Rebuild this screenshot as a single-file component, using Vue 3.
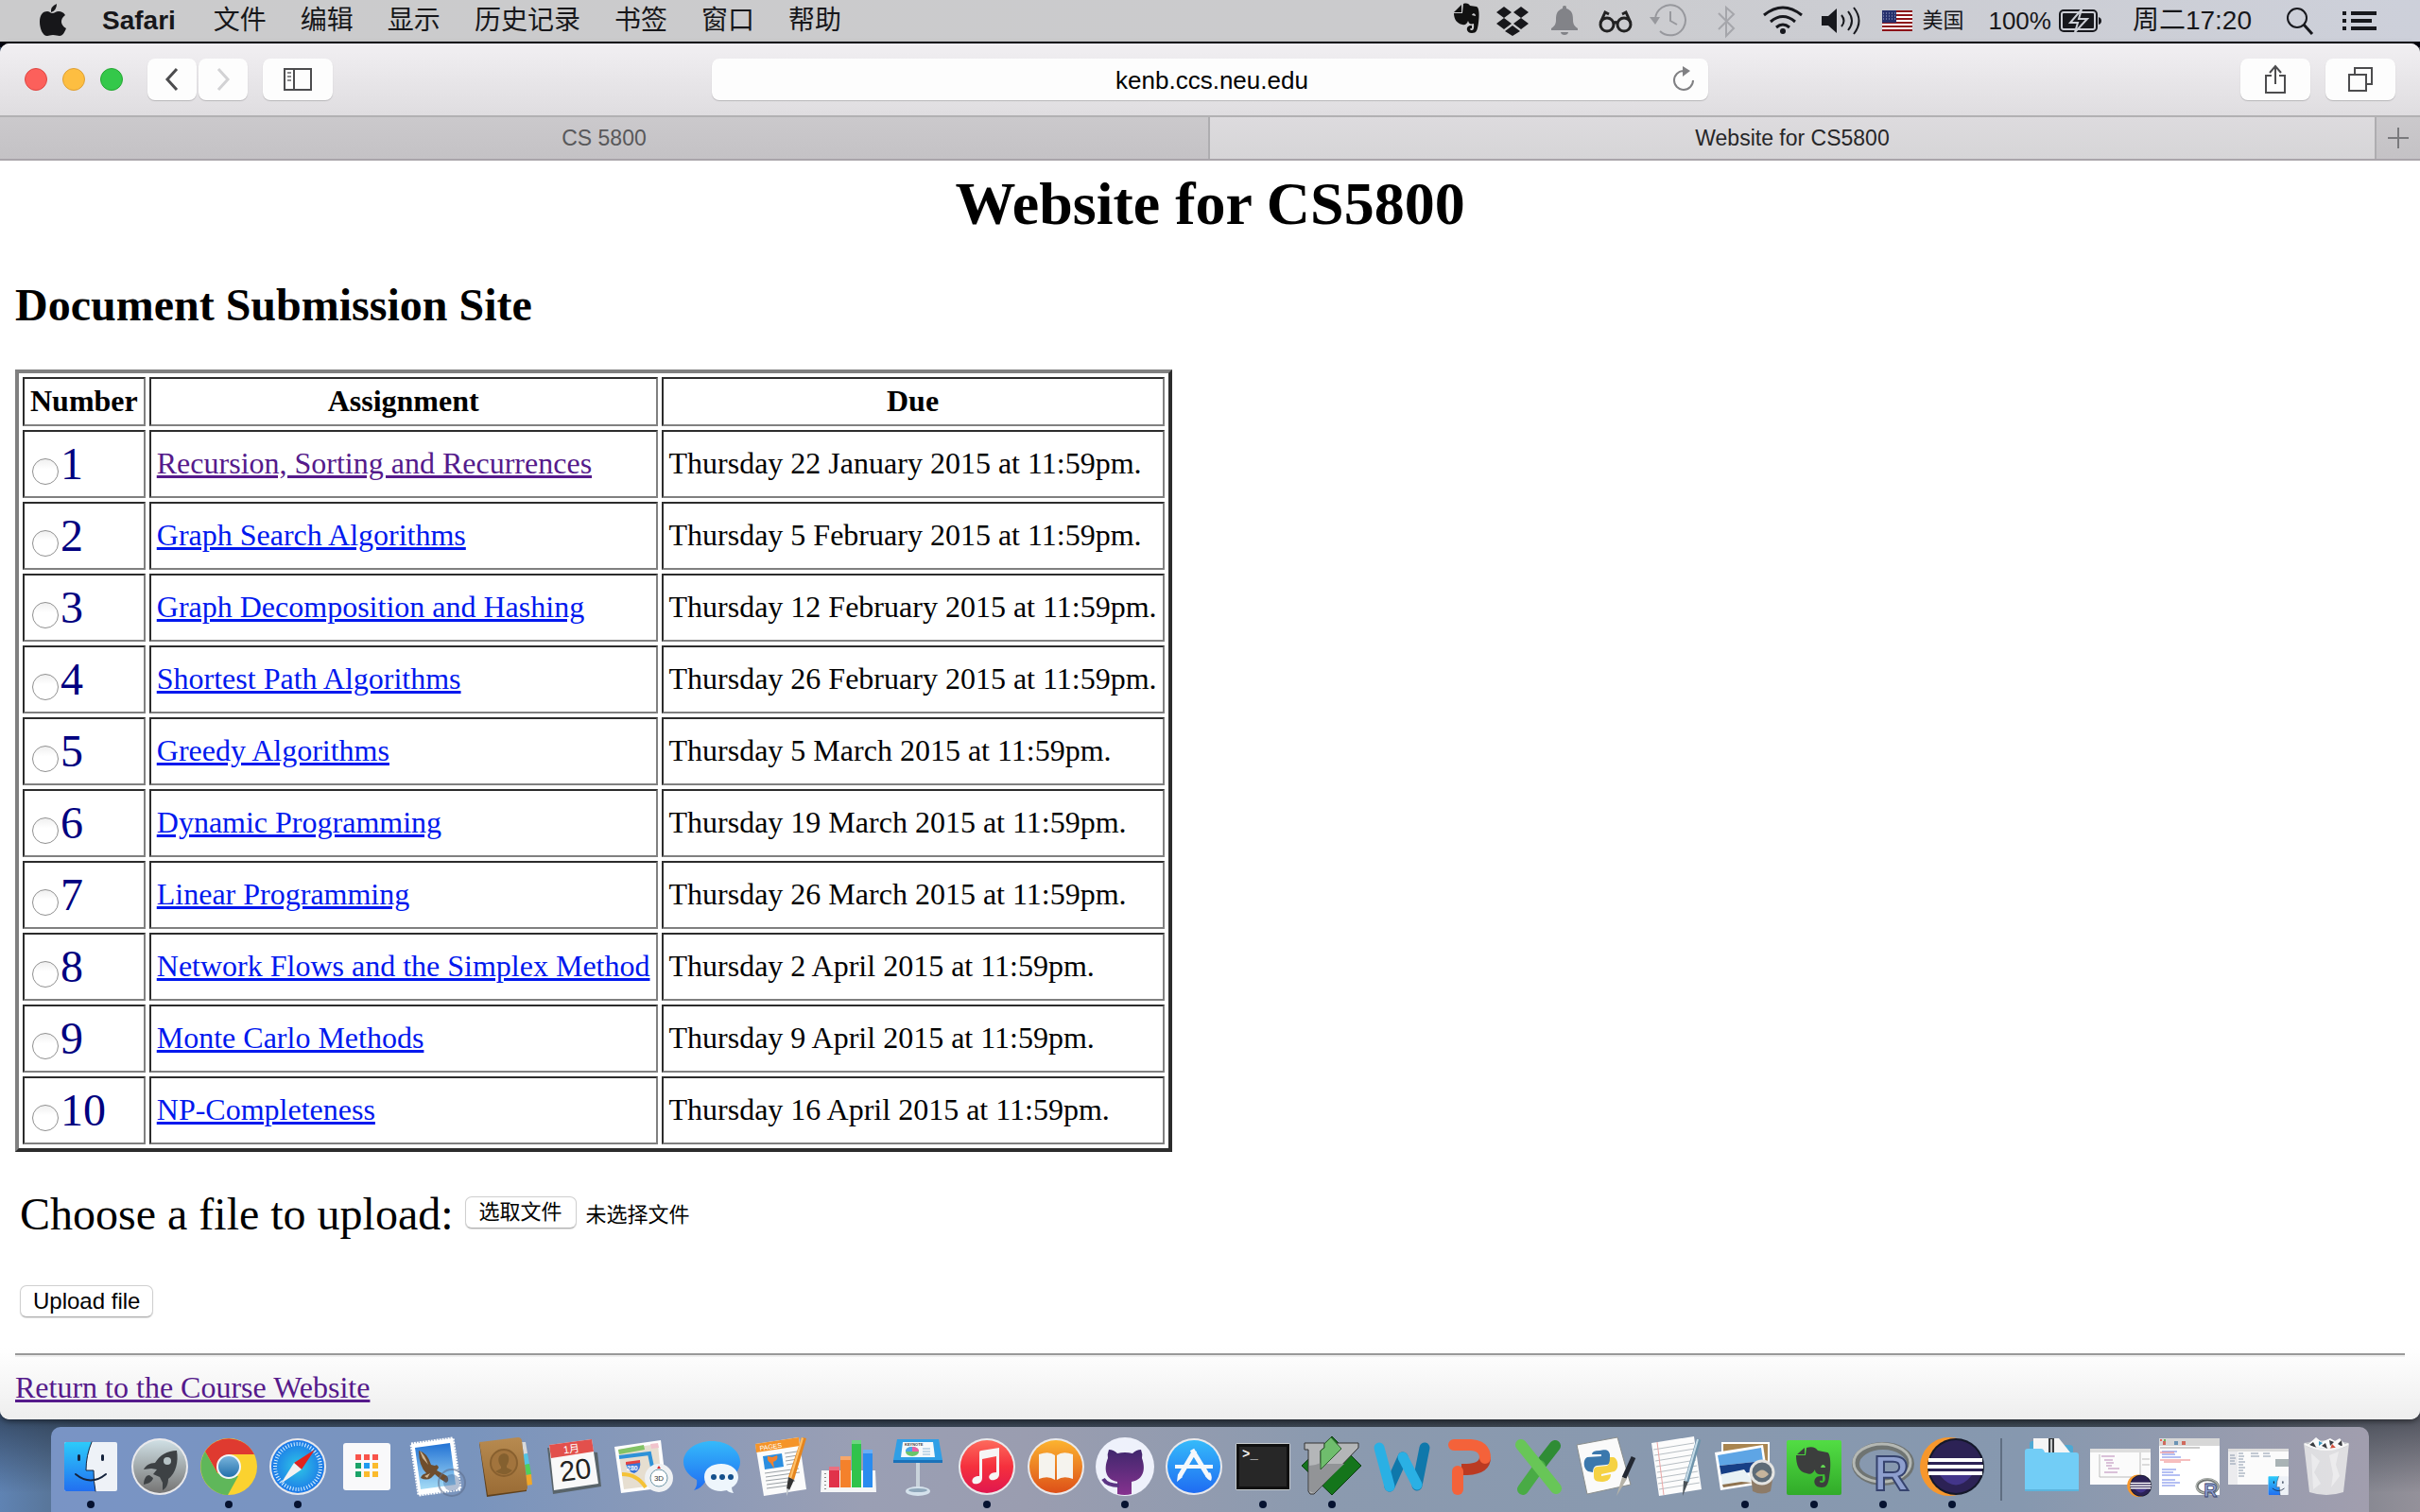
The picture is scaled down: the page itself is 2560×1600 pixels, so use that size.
<script setup>
import { ref } from 'vue'

const menus = ['文件', '编辑', '显示', '历史记录', '书签', '窗口', '帮助']

const url = ref('kenb.ccs.neu.edu')
const chosen = ref(null)
const picker = ref(null)

const assignments = [
  { title: 'Recursion, Sorting and Recurrences', due: 'Thursday 22 January 2015 at 11:59pm.', visited: true },
  { title: 'Graph Search Algorithms', due: 'Thursday 5 February 2015 at 11:59pm.' },
  { title: 'Graph Decomposition and Hashing', due: 'Thursday 12 February 2015 at 11:59pm.' },
  { title: 'Shortest Path Algorithms', due: 'Thursday 26 February 2015 at 11:59pm.' },
  { title: 'Greedy Algorithms', due: 'Thursday 5 March 2015 at 11:59pm.' },
  { title: 'Dynamic Programming', due: 'Thursday 19 March 2015 at 11:59pm.' },
  { title: 'Linear Programming', due: 'Thursday 26 March 2015 at 11:59pm.' },
  { title: 'Network Flows and the Simplex Method', due: 'Thursday 2 April 2015 at 11:59pm.' },
  { title: 'Monte Carlo Methods', due: 'Thursday 9 April 2015 at 11:59pm.' },
  { title: 'NP-Completeness', due: 'Thursday 16 April 2015 at 11:59pm.' },
]

// Status icons are drawn around x = 0; w is the slot each one takes in the bar.
const status = [
  { name: 'Evernote', w: 48, art: '<path fill="#111" d="M-13 13l8-8v8zM-3 4c4-1 6 0 7 2l7 1c3 1 3 10 2 17-1 8-2 11-7 11-6 0-7-7-2-8l2 0v3c-3 0-2 2 0 2 3 0 2-6 2-7-4 1-5 0-6-3-1 3-3 5-6 4-6-1-9-6-9-12h9z"/><path fill="#cbcccf" d="M6 16c1-3 4-2 4 1z"/>' },
  { name: 'Dropbox', w: 50, art: '<path fill="#17171b" d="M-9 7l8 6-8 6-8-6zM9 7l8 6-8 6-8-6zM-9 19l8 6-8 6-8-6zM9 19l8 6-8 6-8-6zM0 27l8 6-8 5-8-5z"/>' },
  { name: 'Notifications', w: 60, art: '<path fill="#828388" d="M0 6c2 0 2 1 2 3 6 2 7 6 7 12 0 5 2 7 5 9v2h-28v-2c3-2 5-4 5-9 0-6 1-10 7-12 0-2 0-3 2-3zM-4 34h8c0 4-8 4-8 0z"/>' },
  { name: 'Glasses', w: 48, art: '<g fill="none" stroke="#222" stroke-width="3"><circle cx="-9" cy="26" r="7"/><circle cx="9" cy="26" r="7"/><path d="M-2 25q2-3 4 0M-16 24l5-11 4 2M16 24l-5-11-4 2"/></g>' },
  { name: 'Time Machine', w: 64, art: '<g fill="none" stroke="#97989d" stroke-width="2"><path d="M-14 20a16 16 0 1 1 5 13"/><path d="M2 12v10l7 4"/></g><path fill="#97989d" d="M-20 18h11l-5 8z"/>' },
  { name: 'Bluetooth', w: 58, art: '<path fill="none" stroke="#a5a6ab" stroke-width="2" d="M-8 14L8 30l-8 8V8l8 7-16 16"/>' },
  { name: 'Wi-Fi', w: 62, art: '<g fill="none" stroke="#17181d" stroke-width="3"><path d="M-20 16q20-16 40 0M-13 23q13-11 26 0M-7 29q7-6 14 0"/></g><circle cy="33" r="3" fill="#17181d"/>' },
  { name: 'Volume', w: 60, art: '<path fill="#17181d" d="M-20 17h7l9-8v26l-9-8h-7z"/><g fill="none" stroke="#17181d" stroke-width="2"><path d="M1 16q5 6 0 12M8 12q8 10 0 20M14 8q11 14 0 28"/></g>' },
]

const round = (fill, art) =>
  `<circle cx="32" cy="32" r="30" fill="#e9e9ec"/><circle cx="32" cy="32" r="28" fill="${fill}"/>${art}`

const finder = '<rect x="4" y="6" width="56" height="52" rx="2" fill="#eef2f7"/><path fill="url(#gBlue)" d="M6 6h27q-6 14-6 30h8q0 12 2 22H6q-2 0-2-2V8q0-2 2-2z"/><g fill="none" stroke="#14233c" stroke-linecap="round"><path stroke-width="1" d="M33 6q-6 14-6 30h8q0 12 2 22"/><path stroke-width="3" d="M19.500 20.500v4M44.500 20.500v4"/><path stroke-width="2" d="M16 40q16 13 32 0"/></g>'
const eclipse = '<circle cx="29" cy="32" r="31" fill="#f7972c"/><circle cx="36" cy="32" r="30" fill="#14182a"/><circle cx="36" cy="32" r="28" fill="#2c2255"/><path fill="#43358a" d="M19 41h34q-17 21-34 0z"/><path fill="#fff" d="M7 23h57v4H7zM6 30h59v4H6zM7 37h57v4H7z"/>'
const rLogo = '<ellipse cx="32" cy="29" rx="29" ry="19" fill="none" stroke="#6f7472" stroke-width="8"/><ellipse cx="31" cy="28" rx="30" ry="20" fill="none" stroke="#b4b8b4" stroke-width="3"/><text x="22" y="57" font-family="Liberation Sans, sans-serif" font-weight="bold" font-size="52" fill="#8e9fce" stroke="#36436e" stroke-width="2">R</text>'

const apps = [
  { name: 'Finder', on: true, art: finder },
  { name: 'Launchpad', art: round('url(#gSteel)', '<path fill="#3d4144" d="M50 15c-10 0-18 5-23 13-6 0-10 3-12 7l8-1 6 1-4 5 7 3 3 6v8c4-2 6-7 6-12 8-6 11-18 9-30zM21 41c-4 0-6 5-6 10 5-1 9-3 10-7z"/><circle cx="40" cy="26" r="4" fill="#b7c3c6"/>') },
  { name: 'Chrome', on: true, art: '<circle cx="32" cy="32" r="30" fill="#fbd22f"/><path fill="#df3a30" d="M7 16A30 30 0 0 1 59 19H32L20 39z"/><path fill="#5fb75a" d="M7 16A30 30 0 0 0 31 62l11-20-22-3z"/><circle cx="32" cy="32" r="13" fill="#f3f6f8"/><circle cx="32" cy="32" r="11" fill="url(#gOrb)"/>' },
  { name: 'Safari', on: true, art: round('url(#gSafari)', '<circle cx="32" cy="32" r="24" fill="none" stroke="#dff3ff" stroke-width="4" stroke-dasharray="1 2"/><path fill="#e2231d" d="M50 14L28 28l8 7z"/><path fill="#f2f2f2" d="M14 50l14-22 8 7z"/>') },
  { name: 'Apps', art: '<rect x="7" y="7" width="50" height="50" rx="3" fill="#f9f9fa"/><g fill="#f9544b"><path d="M20 19h6v6h-6zM29 19h6v6h-6zM38 19h6v6h-6z"/></g><path fill="#1ba368" d="M20 28h6v6h-6zM20 37h6v6h-6z"/><path fill="#1e9bf0" d="M29 28h6v6h-6z"/><path fill="#fbbb2d" d="M38 28h6v6h-6zM29 37h6v6h-6zM38 37h6v6h-6z"/>' },
  { name: 'Mail', art: '<path fill="#fff" stroke="#fff" stroke-width="3" stroke-dasharray="2 1" d="M6 8l44-6 8 54-44 6z"/><path fill="url(#gSky)" d="M10 12l37-5 6 44-37 5z"/><path fill="#6e4d2d" d="M14 15q9 2 13 15l4 1q3-2 4 2l-2 3 11 6q3 5-1 7-6-3-12-9l-4 4q-5 3-11 0 1-4 6-5-8-8-8-24z"/><path fill="#cdb391" d="M15 15q5 4 9 15l-6-7zM20 42l6-3-3 5z"/><circle cx="49" cy="49" r="14" fill="none" stroke="#5f6f8d" stroke-width="2" opacity="0.600"/><circle cx="49" cy="49" r="9" fill="#3e5f94" opacity="0.400"/>' },
  { name: 'Contacts', art: '<path fill="#d9dadb" d="M50 6l4 0 2 12-4 1z"/><path fill="#55c4e4" d="M51 19l5-1 2 11-5 1z"/><path fill="#4fd05a" d="M53 30l5-1 2 11-5 1z"/><path fill="#f1a728" d="M54 41l6-1 1 11-6 1z"/><path fill="#60411c" d="M5 7l8 57 42-6V52z"/><path fill="url(#gLeather)" d="M5 6L46 1q3 0 4 3l6 50q0 3-3 3l-39 5z"/><circle cx="31" cy="28" r="14" fill="#a2743d" stroke="#88602f" stroke-width="2"/><path fill="#84602f" d="M31 18c7 0 6 9 3 13l0 2 6 3q-8 8-18 1l6-3v-2c-4-5-4-13 3-14z"/>' },
  { name: 'Calendar', art: '<path fill="#59646a" d="M4 12l6 49 51-8-4-36z"/><path fill="#f9f9f9" d="M6 9l45-6 7 47-47 7z"/><path fill="#e2504c" d="M6 9l45-6 2 13-45 7z"/><g font-family="Liberation Sans, Noto Sans CJK SC, sans-serif" text-anchor="middle" transform="rotate(-8 32 32)"><text x="32" y="17" font-size="11" fill="#fff">1月</text><text x="33" y="46" font-size="30" fill="#222">20</text></g>' },
  { name: 'Maps', art: '<path fill="#fdfdfd" d="M2 11l49-7 6 50-48 6z"/><path fill="#e6ded0" d="M6 14l42-6 4 43-40 5z"/><path fill="#82c365" d="M6 14l27-5 1 5-27 5z"/><path fill="#f1c3cc" d="M40 8l8-1 1 5-8 1z"/><path fill="none" stroke="#2e92d8" stroke-width="4" d="M7 22l32-4 5 24"/><path fill="none" stroke="#f5c236" stroke-width="4" d="M10 40q16 0 25 14"/><path fill="#3674d8" d="M14 28l15-2q2 9-6 13-8-2-9-11z"/><path fill="#e34242" d="M14 27l15-2v3l-15 2z"/><text x="15" y="36" font-family="Liberation Sans, sans-serif" font-size="7" font-weight="bold" fill="#fff">280</text><circle cx="49" cy="44" r="15" fill="#eff1f3"/><circle cx="49" cy="44" r="9" fill="#fff" stroke="#6a94a6" stroke-width="1"/><path fill="#d8262a" d="M49 31l2 3h-4z"/><text x="49" y="47" text-anchor="middle" font-family="Liberation Sans, sans-serif" font-size="8" fill="#333">3D</text>' },
  { name: 'Messages', art: '<path fill="url(#gChat)" d="M32 5c17 0 30 10 30 22s-13 22-30 22l-7-1q-4 7-12 9 4-4 3-11C8 42 2 35 2 27 2 15 15 5 32 5z"/><path fill="#eef6fc" d="M42 29c10 0 18 6 18 14 0 5-3 9-7 11q0 3 2 6-6-1-7-3l-6 1c-10 0-18-6-18-15s8-14 18-14z"/><g fill="#14508c"><circle cx="34" cy="43" r="3"/><circle cx="43" cy="43" r="3"/><circle cx="52" cy="43" r="3"/></g>' },
  { name: 'Pages', art: '<path fill="#fbfbfb" d="M5 8l46-7 8 55-45 7z"/><path fill="#f59428" d="M5 8l46-7 1 9-46 7z"/><text x="10" y="15" transform="rotate(-8 10 15)" font-family="Liberation Sans, sans-serif" font-size="7" fill="#fff">PAGES</text><path fill="#2b8ee0" d="M13 21l20-3 2 14-20 3z"/><path fill="#f2822e" d="M18 21l5 1 5-2q2 5-4 7l1 7-4-6q-4-2-3-7z"/><path stroke="#9aa0a5" stroke-width="1" fill="none" d="M36 18l13-2M37 22l13-2M37 26l13-2M38 30l12-2M15 39l36-5M16 43l36-5M16 47l24-3M17 51l30-4M17 55l22-3"/><path fill="#e5851d" d="M54 1l5 1-13 44-6-3z"/><path fill="#ffc069" d="M54 1l2 1-13 43-2-1z"/><path fill="#333" d="M40 43l6 3-5 11-3-1z"/><path fill="#c8cdd2" d="M38 55l3 1-3 7z"/>' },
  { name: 'Numbers', art: '<path fill="#f5f6f7" d="M3 36h57l1 23H2z"/><path fill="#888" d="M6 39h2v1H6zM6 43h2v1H6zM6 47h2v1H6zM6 51h2v1H6zM6 55h2v1H6z"/><path fill="#e1324a" d="M11 32h11v22H11z"/><path fill="#f4812b" d="M23 21h11v33H23z"/><path fill="#30c34b" d="M35 4h10v50H35z"/><path fill="#2a8cef" d="M47 14h10v40H47z"/><path fill="#fff" opacity="0.300" d="M11 32h11v4H11zM23 21h11v4H23zM35 4h10v4H35zM47 14h10v4H47z"/>' },
  { name: 'Keynote', art: '<path fill="#c9d3db" d="M30 27h4v30h-4z"/><ellipse cx="32" cy="58" rx="13" ry="5" fill="#d5e2ec"/><ellipse cx="32" cy="57" rx="10" ry="2" fill="#8ea7ba"/><path fill="#2f9fe6" d="M10 3h44l4 22H6z"/><path fill="#1a72b9" d="M6 25h52v3H6z"/><path fill="#f5f9fb" d="M16 6h32l2 16H14z"/><text x="18" y="10" font-family="Liberation Sans, sans-serif" font-size="4" font-weight="bold" fill="#444">KEYNOTE</text><ellipse cx="26" cy="16" rx="7" ry="5" fill="#6ac46b"/><path fill="#e960a7" d="M26 16v-5q7 0 7 5z"/><path fill="#4ba4e8" d="M26 16h-7q0-5 7-5z"/><path stroke="#8fb8d4" fill="none" d="M37 13h8M37 16h8M37 19h8"/>' },
  { name: 'iTunes', on: true, art: round('url(#gRed)', '<path fill="#f6f4f5" d="M24 17q0-2 2-2l19-3v28c0 5-5 7-9 6-4-3-1-8 6-8V21l-15 3v20c0 6-6 7-9 6-4-3 0-9 6-8z"/>') },
  { name: 'iBooks', art: round('url(#gOrange)', '<path fill="#f5f3ee" d="M14 19q11-4 17 1v26q-7-5-17-1zM50 19q-11-4-17 1v26q7-5 17-1z"/>') },
  { name: 'GitHub', on: true, art: '<circle cx="32" cy="32" r="31" fill="#eef1fb"/><path fill="url(#gCat)" d="M15 14q5 0 9 4 8-2 16 0 4-4 9-4 2 5 1 9c5 14 0 23-11 25v13q-7 2-15 0V48C12 46 9 35 14 23q-1-4 1-9z"/><path fill="none" stroke="#5b3584" stroke-width="4" d="M9 45q4 7 17 7"/>' },
  { name: 'App Store', art: round('url(#gChat)', '<g fill="none" stroke="#f5f8fb" stroke-width="5"><path d="M12 32h40" stroke-width="4"/><path d="M33 15L17 42M30 14l17 28"/></g><path fill="#f5f8fb" d="M15 40l5 3-6 5zM44 41l5-3q3 4 1 9-5-2-6-6z"/>') },
  { name: 'Terminal', on: true, art: '<rect x="3" y="7" width="58" height="50" rx="2" fill="#c6cbce"/><rect x="4" y="8" width="56" height="48" fill="#101010"/><rect x="7" y="11" width="50" height="42" fill="#272727"/><text x="10" y="23" font-family="Liberation Mono, monospace" font-weight="bold" font-size="14" fill="#f2f2f2">&gt;_</text>' },
  { name: 'MacVim', on: true, art: '<path fill="#14751b" stroke="#0d3d12" d="M32 0l31 31-31 31L0 31z"/><path fill="#b4b6b8" stroke="#333" stroke-width="1" d="M3 7h21v5l-4 3v20l19-20-2-8h23v5L13 61H9l-2-3V14H3z"/><path fill="#929497" d="M8 31q6 0 12-3v7l6-6h19L13 60l-5-2z"/><path fill="#6fbd6d" stroke="#2c5e2c" stroke-width="1" d="M31 1l11 12-22 22V15l4-3V8z"/>' },
  { name: 'Word', art: '<g fill="none" stroke-width="11" stroke-linecap="round"><path stroke="#0f78ab" d="M57 12l-8 40M20 53l14-31"/><path stroke="#2ab0e4" d="M9 12l11 41M34 22l15 29"/></g>' },
  { name: 'PowerPoint', art: '<g fill="none" stroke-width="12" stroke-linecap="round"><path stroke="#bb3a22" stroke-linecap="butt" d="M48 22q0 12-19 13h-6"/><path stroke="#f4623a" d="M15 9h18q15 1 15 14"/><path stroke="#f4623a" d="M19 37v19"/></g>' },
  { name: 'Excel', art: '<g fill="none" stroke-width="12" stroke-linecap="round"><path stroke="#2f8c35" d="M50 10L36 28"/><path stroke="#49ab45" d="M34 31L16 56"/><path stroke="#68c657" d="M14 9l37 46"/></g>' },
  { name: 'IDLE', art: '<path fill="#fafafa" stroke="#8b8f8d" stroke-width="1" d="M0 9l43-8 14 50-46 10z"/><path fill="#3b78ad" d="M28 15c8-2 10 0 11 4v7q0 4-4 4l-10 1q-4 1-4 7l-5-1c-5-2-6-13-1-15l15-1v-2h-10q0-4 8-4z" transform="translate(-4 0)"/><path fill="#f5d244" d="M39 22h4c5 2 6 12 1 15l-14 3v2l10-2c0 7-6 8-10 8-7 0-8-3-8-6v-6q0-4 5-4l9-1q3-1 3-9z" transform="translate(-4 0)"/><path stroke="#232832" stroke-width="5" fill="none" d="M60 22L50 44"/><path fill="#b6b3a8" d="M48 43l5 2-11 18z"/>' },
  { name: 'TextEdit', art: '<path fill="#fcfcfc" d="M6 7l45-7 8 56-45 7z"/><path stroke="#b7bec3" fill="none" d="M8 14l43-7M9 20l43-7M10 26l43-7M11 32l42-7M12 38l42-7M12 44l43-7M13 50l43-7M14 56l43-7"/><path stroke="#eba6a6" fill="none" d="M12 6l7 56"/><path stroke="#6e93aa" stroke-width="5" fill="none" d="M56 3L43 48"/><path stroke="#c7dde9" stroke-width="2" fill="none" d="M55 3L42 48"/><path fill="#4a5258" d="M40 47l5 1-6 15z"/>' },
  { name: 'Preview', on: true, art: '<path fill="#fff" d="M7 6h51v42H7z"/><path fill="#a98550" d="M9 8h47v38H9z"/><path fill="#fff" d="M0 17l51-8 6 40-51 8z"/><path fill="#5ea5e5" d="M3 20l46-8 2 14-46 5z"/><path fill="#173f86" d="M5 31l46-5 2 10-46 6z"/><path fill="#e9f2f5" d="M7 40l24-5 9 12-32 7z"/><path fill="#8f7350" d="M8 51l20-3 12 1-31 5z"/><path fill="#8d7b68" d="M38 40h24l-3 18q-9 5-19 0z"/><circle cx="50" cy="38" r="12" fill="#5d6b77" stroke="#e4e4e2" stroke-width="3"/><path fill="#c5b49c" d="M43 40q7-9 14 0-7 8-14 0z"/>' },
  { name: 'Evernote', on: true, art: '<rect x="3" y="4" width="58" height="58" rx="2" fill="url(#gGreen)"/><path fill="#3c3e3d" d="M14 19l8-7v7zM24 12c6-2 10 0 12 3l10 2c4 1 4 17 2 26-1 8-3 11-8 11-10 0-10-12-1-12l2 0v5c-4-1-4 2-1 2 5 0 4-6 3-9-7 1-10-1-10-5-2 4-5 6-9 4-8-1-11-9-11-19h10z"/><path fill="#62d851" d="M39 33c1-5 5-3 5 0z"/>' },
  { name: 'R', on: true, art: rLogo },
  { name: 'Eclipse', on: true, art: eclipse },
]

const stack = [
  { name: 'Downloads', art: '<path fill="#4da9d4" d="M9 8q0-3 3-3h8l2 4h29q4 0 4 3v10H9z"/><path fill="#f5f5f5" d="M13 2h27l12 15v8H13z"/><path fill="#3a3d40" d="M29 2h6v16h-6z"/><path fill="#c5c9cb" d="M31 3h2v15h-2z"/><path fill="#72cdf6" d="M4 16q0-3 3-3h14q3 0 4 4h33q3 0 3 3v38H4z"/><path fill="#5bb4dd" d="M4 56h57v2H4z"/>' },
  { name: 'Eclipse window', art: `<path fill="#fbfbfb" d="M0 13h64v38H0z"/><path fill="#dedede" d="M0 13h64v4H0z"/><path stroke="#bbb" fill="none" d="M10 19v24M53 17v26M10 43h43M55 24h8M55 30h8"/><path stroke="#b987b7" fill="none" d="M12 21h14M15 25h9M17 28h8M17 31h6M19 34h12M15 38h14"/><g transform="translate(40 40) scale(0.380)">${eclipse}</g>` },
  { name: 'R window', art: `<path fill="#fff" d="M0 2h64v60H0z"/><path fill="#d7d7d7" d="M0 2h64v8H0z"/><path fill="#eb6355" d="M1 3h2v2H1z"/><path fill="#69b95a" d="M5 3h2v2H5z"/><path fill="#6b93b4" d="M16 5h4v4h-4z"/><path fill="#cf6a5d" d="M4 5h3v4H4zM24 5h4v4h-4z"/><path stroke="#999" fill="none" d="M1 12h42"/><path stroke="#6a80e8" fill="none" d="M3 16h16M3 19h14M3 22h20M3 35h15M3 38h12M3 41h19M3 46h14M3 49h19M3 52h14"/><path stroke="#ee7c7c" fill="none" d="M1 17h15M1 25h32M5 27h18"/><g transform="translate(39 42) scale(0.380)">${rLogo}</g>` },
  { name: 'Finder window', art: `<path fill="#fbfbfb" d="M0 13h64v38H0z"/><path fill="#dcdcdc" d="M0 13h64v3H0z"/><path fill="#ebebee" d="M0 16h10v35H0z"/><path stroke="#8a98ab" fill="none" d="M2 20h5M2 23h6M2 26h5M2 29h6M11 18h5M11 21h6M11 24h5M11 27h7M11 30h5M11 33h7M11 36h5M11 39h7M11 42h6M24 18h8M24 21h9M37 18h7M37 21h8"/><path fill="#a9b3b5" d="M50 24h14v8H50z"/><g transform="translate(41 40) scale(0.380)">${finder}</g>` },
  { name: 'Trash', art: '<path fill="#e6e6e7" fill-opacity="0.900" d="M8 7l6 52q18 6 36 0l6-52z"/><path fill="#c3c6cb" d="M8 7q24-6 48 0-2 7-24 7T8 7z"/><path fill="#fafafa" d="M12 9l9-8 6 5 9-4 5 3 5-3 7 8q-20 6-41-1z"/><path fill="#3a3d42" d="M14 9l4-3 4 7zM35 4l5 2-4 4zM44 8l4-4 1 7zM27 10l4-3 2 6z"/><path fill="#d2503c" d="M38 8l4 4-6 1z"/><path fill="#3d9bc3" d="M24 5l4 2-4 3z"/><path fill="none" stroke="#f6f6f6" stroke-width="2" d="M9 8q23 12 46 0"/><path fill="#fff" opacity="0.400" d="M16 18l9 8-6 12 7 12-8 6zM35 20l10-4-3 14 4 12-9 12 2-14z"/>' },
]
</script>

<template>
  <div class="desktop">
    <svg class="defs" width="0" height="0" aria-hidden="true">
      <defs>
        <linearGradient id="gBlue" x2="0" y2="1"><stop stop-color="#2ccbfa" /><stop offset="1" stop-color="#226ff0" /></linearGradient>
        <linearGradient id="gSteel" x2="0" y2="1"><stop stop-color="#cfdfe4" /><stop offset="1" stop-color="#757473" /></linearGradient>
        <linearGradient id="gOrb" x2="0" y2="1"><stop stop-color="#79b4dc" /><stop offset="1" stop-color="#2370ab" /></linearGradient>
        <radialGradient id="gSafari"><stop stop-color="#2ec6e6" /><stop offset="1" stop-color="#1c78e8" /></radialGradient>
        <linearGradient id="gSky" x2="0" y2="1"><stop stop-color="#2272d4" /><stop offset="1" stop-color="#a5dcf6" /></linearGradient>
        <linearGradient id="gLeather" x2="0" y2="1"><stop stop-color="#b78a50" /><stop offset="1" stop-color="#9a6c35" /></linearGradient>
        <linearGradient id="gChat" x2="0" y2="1"><stop stop-color="#35bafa" /><stop offset="1" stop-color="#1f6cf2" /></linearGradient>
        <linearGradient id="gRed" x2="0" y2="1"><stop stop-color="#fd6a5c" /><stop offset="0.500" stop-color="#f5303d" /><stop offset="1" stop-color="#e0174f" /></linearGradient>
        <linearGradient id="gOrange" x2="0" y2="1"><stop stop-color="#fcb32f" /><stop offset="1" stop-color="#dd4f18" /></linearGradient>
        <linearGradient id="gCat" x2="0" y2="1"><stop stop-color="#40276d" /><stop offset="1" stop-color="#86328f" /></linearGradient>
        <linearGradient id="gGreen" x2="0" y2="1"><stop stop-color="#52dd44" /><stop offset="1" stop-color="#31ab29" /></linearGradient>
      </defs>
    </svg>

    <header class="menubar">
      <nav class="menus">
        <svg class="apple" width="30" height="36" viewBox="0 0 30 36" role="img" aria-label="Apple">
          <path fill="#17171a" d="M20 2q0 7-6 9-1-6 6-9zM15 12c3 0 4-2 7-2s5 1 7 4c-6 4-5 11 1 14-2 5-4 8-7 8-2 0-4-1-7-1s-4 1-6 1C5 36 2 28 2 21c0-8 4-11 8-11 2 0 4 2 5 2z" />
        </svg>
        <strong>Safari</strong>
        <span v-for="m in menus" :key="m">{{ m }}</span>
      </nav>
      <div class="status">
        <svg
          v-for="s in status" :key="s.name" role="img" :aria-label="s.name"
          :width="s.w" height="44" :viewBox="`${-s.w / 2} 0 ${s.w} 44`" v-html="s.art"
        />
        <span class="input-source">
          <svg width="32" height="22" viewBox="0 0 32 22" aria-hidden="true">
            <path fill="#fff" d="M0 0h32v22H0z" />
            <path stroke="#8c1218" stroke-width="2" d="M0 1h32M0 5h32M0 9h32M0 13h32M0 17h32M0 21h32" />
            <path fill="#26306d" d="M0 0h15v13H0z" />
            <path stroke="#a9afd0" stroke-dasharray="1 2" d="M1 3h13M1 6h13M1 9h13" />
          </svg>
          美国
        </span>
        <span class="battery">
          100%
          <svg width="46" height="26" viewBox="0 0 46 26" aria-hidden="true">
            <rect x="1" y="2" width="39" height="22" rx="4" fill="none" stroke="#17181d" stroke-width="2" />
            <path fill="#17181d" d="M42 9q3 1 3 4t-3 4z" />
            <rect x="4" y="5" width="33" height="16" rx="1" fill="#17181d" />
            <path fill="#17181d" stroke="#cdd0d7" stroke-width="2" d="M24 1L12 15h8l-3 10 13-14h-9z" />
          </svg>
        </span>
        <span class="clock">周二17:20</span>
        <svg class="search" width="30" height="30" viewBox="0 0 30 30" role="img" aria-label="Spotlight">
          <circle cx="12" cy="12" r="10" fill="none" stroke="#17181d" stroke-width="2" />
          <path stroke="#17181d" stroke-width="3" d="M19 19l9 10" />
        </svg>
        <svg width="36" height="22" viewBox="0 0 36 22" role="img" aria-label="Notification Center">
          <path fill="#17181d" d="M0 1h4v4H0zM9 1h27v4H9zM0 9h4v4H0zM9 9h22v4H9zM0 17h4v4H0zM9 17h27v4H9z" />
        </svg>
      </div>
    </header>

    <main class="window">
      <div class="toolbar">
        <div class="side">
          <div class="lights">
            <button class="light red" aria-label="Close"></button>
            <button class="light amber" aria-label="Minimize"></button>
            <button class="light green" aria-label="Zoom"></button>
          </div>
          <div class="pair">
            <button class="tool nav" aria-label="Back">
              <svg width="16" height="26" viewBox="0 0 16 26"><path fill="none" stroke="#4c4c4e" stroke-width="3" d="M13 2L3 13l10 11" /></svg>
            </button>
            <button class="tool nav" aria-label="Forward">
              <svg width="16" height="26" viewBox="0 0 16 26"><path fill="none" stroke="#d2d2d4" stroke-width="3" d="M3 2l10 11L3 24" /></svg>
            </button>
          </div>
          <button class="tool" aria-label="Sidebar">
            <svg width="30" height="24" viewBox="0 0 30 24">
              <path fill="none" stroke="#4c4c4e" stroke-width="2" d="M1 1h28v22H1zM11 1v22" />
              <path stroke="#8a8a8c" stroke-width="2" d="M4 5h4M4 9h4M4 13h4" />
            </svg>
          </button>
        </div>
        <div class="address">
          <input v-model="url" type="text" aria-label="Address">
          <button class="reload" aria-label="Reload">
            <svg width="24" height="28" viewBox="0 0 24 28">
              <path fill="none" stroke="#808083" stroke-width="2" d="M12 5a10 10 0 1 0 10 10" />
              <path fill="#808083" d="M11 0l8 5-8 6z" />
            </svg>
          </button>
        </div>
        <div class="side end">
          <button class="tool" aria-label="Share">
            <svg width="24" height="32" viewBox="0 0 24 32">
              <path fill="none" stroke="#4c4c4e" stroke-width="2" d="M8 12H2v18h20V12h-6M12 21V3M6 9l6-7 6 7" />
            </svg>
          </button>
          <button class="tool" aria-label="Show all tabs">
            <svg width="26" height="26" viewBox="0 0 26 26">
              <path fill="none" stroke="#4c4c4e" stroke-width="2" d="M7 7V1h18v17h-5M1 8h18v17H1z" />
            </svg>
          </button>
        </div>
      </div>

      <div class="tabs" role="tablist">
        <button class="tab" role="tab">CS 5800</button>
        <button class="tab active" role="tab" aria-selected="true">Website for CS5800</button>
        <button class="tab-new" aria-label="New tab">
          <svg width="22" height="22" viewBox="0 0 22 22"><path stroke="#79797c" stroke-width="2" d="M11 0v22M0 11h22" /></svg>
        </button>
      </div>

      <article class="page">
        <h1>Website for CS5800</h1>
        <h2>Document Submission Site</h2>
        <form @submit.prevent>
          <table>
            <thead>
              <tr><th>Number</th><th>Assignment</th><th>Due</th></tr>
            </thead>
            <tbody>
              <tr v-for="(a, i) in assignments" :key="a.title">
                <td class="pick">
                  <label class="number"><input v-model="chosen" type="radio" name="assignment" :value="i + 1">{{ i + 1 }}</label>
                </td>
                <td><a href="#" :class="{ visited: a.visited }">{{ a.title }}</a></td>
                <td>{{ a.due }}</td>
              </tr>
            </tbody>
          </table>
          <div class="upload">
            <label for="file">Choose a file to upload:</label>
            <input id="file" ref="picker" type="file" hidden>
            <button type="button" class="push file" @click="picker.click()">选取文件</button>
            <span class="file-name">未选择文件</span>
          </div>
          <button type="submit" class="push submit">Upload file</button>
        </form>
        <hr>
        <a href="#" class="visited">Return to the Course Website</a>
      </article>
    </main>

    <footer class="dock">
      <div v-for="a in apps" :key="a.name" class="slot">
        <svg width="64" height="64" viewBox="0 0 64 64" role="img" :aria-label="a.name" v-html="a.art" />
        <i v-if="a.on" class="running"></i>
      </div>
      <div class="divider"></div>
      <div v-for="a in stack" :key="a.name" class="slot">
        <svg width="64" height="64" viewBox="0 0 64 64" role="img" :aria-label="a.name" v-html="a.art" />
      </div>
    </footer>
  </div>
</template>

<style>
body {
  margin: 0;
}
</style>

<style scoped>
* {
  box-sizing: border-box;
}
.desktop {
  display: flex;
  flex-direction: column;
  min-height: 100vh;
  font-family: "Liberation Sans", "Noto Sans CJK SC", sans-serif;
  background:
    linear-gradient(#02030f 50px, transparent 50px),
    linear-gradient(to top, transparent 20px, rgba(20, 28, 40, 0.5) 98px),
    linear-gradient(to right, #5f83b3, #56708f 3%, #56657a 35%, #5c646f 60%, #5e6b77 90%, #94919a);
}
.defs {
  position: absolute;
}
button {
  border: 0;
  padding: 0;
  font: inherit;
  color: inherit;
}

.menubar {
  display: flex;
  justify-content: space-between;
  height: 44px;
  margin-bottom: 2px;
  padding: 0 46px 0 40px;
  background: linear-gradient(to right, #cbcbcc, #cbcbcd 60%, #cdd0da);
  color: #17171a;
  font-size: 28px;
  line-height: 44px;
}
.menus,
.status,
.input-source,
.battery {
  display: flex;
  align-items: center;
}
.menus {
  gap: 36px;
}
.menus strong {
  margin: 0 4px 0 2px;
}
.apple {
  margin-bottom: 4px;
}
.input-source {
  gap: 10px;
  margin: 0 26px 0 14px;
  font-size: 22px;
}
.battery {
  gap: 8px;
  font-size: 26px;
}
.clock {
  margin: 0 36px 0 32px;
}
.search {
  margin-right: 30px;
}

.window {
  display: flex;
  flex-direction: column;
  flex: 1;
  border-radius: 10px;
  overflow: hidden;
  background: #fff;
  box-shadow: 0 2px 6px rgba(0, 0, 0, 0.5);
}
.toolbar {
  display: grid;
  grid-template-columns: 1fr 42% 1fr;
  align-items: center;
  height: 76px;
  padding: 0 26px;
  background: linear-gradient(#f1eff2, #dfdde0);
}
.side,
.lights,
.pair {
  display: flex;
  align-items: center;
}
.side {
  gap: 16px;
}
.end {
  justify-content: flex-end;
}
.lights {
  gap: 16px;
  margin-right: 10px;
}
.light {
  width: 24px;
  height: 24px;
  border-radius: 50%;
}
.red {
  background: #fc605b;
  border: 1px solid #de4642;
}
.amber {
  background: #fdbe41;
  border: 1px solid #de9f34;
}
.green {
  background: #34c84a;
  border: 1px solid #24a732;
}
.pair {
  gap: 2px;
}
.tool {
  display: grid;
  place-items: center;
  width: 74px;
  height: 44px;
  border-radius: 8px;
  background: #fdfdfd;
  box-shadow: 0 1px 1px #b9b7ba;
}
.nav {
  width: 52px;
}
.address {
  display: flex;
  align-items: center;
  height: 44px;
  padding: 0 14px 0 42px;
  border-radius: 8px;
  background: #fdfdfd;
  box-shadow: 0 1px 1px #b9b7ba;
}
.address input {
  flex: 1;
  min-width: 0;
  padding: 2px 0 0;
  border: 0;
  background: none;
  font: 26px "Liberation Sans", sans-serif;
  text-align: center;
  color: #000;
}
.reload {
  display: grid;
  background: none;
}

.tabs {
  display: flex;
  height: 48px;
  border-top: 2px solid #b2b1b3;
  border-bottom: 2px solid #a9a5aa;
  background: linear-gradient(#cbc9cc, #c4c2c5);
  font-size: 23px;
}
.tab {
  flex: 1279;
  background: none;
  color: #58585a;
}
.tab.active {
  flex: 1233;
  border-left: 2px solid #aeadb0;
  border-right: 2px solid #aeadb0;
  background: linear-gradient(#dddbde, #d6d5d7);
  color: #262628;
}
.tab-new {
  display: grid;
  place-items: center;
  width: 46px;
  background: none;
}

.page {
  flex: 1;
  padding: 0 16px 12px;
  background: linear-gradient(to top, #eee, #fff 76px);
  color: #000;
  font: 32px/36px "Liberation Serif", serif;
}
h1 {
  margin: 8px 0 42px;
  font-size: 64px;
  line-height: 76px;
  text-align: center;
}
h2 {
  margin: 0 0 41px;
  font-size: 48px;
  line-height: 54px;
}
a {
  color: #0018ee;
}
a.visited {
  color: #551a8b;
}
table {
  border: 4px solid;
  border-color: #808080 #2c2c2c #2c2c2c #808080;
  border-collapse: separate;
  border-spacing: 4px;
}
th,
td {
  padding: 5px 6px 7px;
  border: 2px solid;
  border-color: #2c2c2c #808080 #808080 #2c2c2c;
  white-space: nowrap;
}
.pick {
  padding: 6px;
}
.number {
  display: flex;
  align-items: center;
  color: #000080;
  font-size: 48px;
  line-height: 56px;
}
.number input {
  appearance: none;
  width: 28px;
  height: 28px;
  margin: 16px 2px 0;
  border: 1px solid #909090;
  border-radius: 50%;
  background: linear-gradient(#f0f0f0, #fff 40%);
}
.number input:checked {
  background: #3478f6;
}
.upload {
  display: flex;
  align-items: center;
  margin: 39px 0 48px 5px;
  font-size: 48px;
  line-height: 54px;
}
.push {
  height: 34px;
  border: 1px solid #cfcfcf;
  border-bottom-color: #b0b0b0;
  border-radius: 7px;
  background: #fff;
  box-shadow: 0 1px 1px #dcdcdc;
  font-family: "Liberation Sans", "Noto Sans CJK SC", sans-serif;
  line-height: 30px;
}
.file {
  margin: 0 10px 4px 12px;
  padding: 0 14px;
  font-size: 22px;
}
.file-name {
  margin-bottom: 4px;
  font-family: "Noto Sans CJK SC", sans-serif;
  font-size: 22px;
  line-height: 30px;
}
.submit {
  display: block;
  margin-left: 5px;
  padding: 0 13px;
  font-size: 24px;
}
hr {
  height: 4px;
  margin: 38px 0 14px;
  border: 0;
  border-top: 2px solid #999;
  border-bottom: 2px solid #eee;
}

.dock {
  display: flex;
  height: 90px;
  margin: 8px 54px 0;
  padding: 10px 8px 0 6px;
  border-radius: 10px 10px 0 0;
  background: linear-gradient(to right, #7994c5, #7994bd 18%, #9a9fb4 35%, #9a9db0 42%, #8b9aaf 55%, #8698af 85%, #a19eae);
}
.slot {
  display: flex;
  flex: 1;
  flex-direction: column;
  align-items: center;
  gap: 4px;
}
.slot svg {
  overflow: visible;
}
.running {
  width: 8px;
  height: 8px;
  border-radius: 50%;
  background: #051230;
}
.divider {
  width: 2px;
  height: 66px;
  margin: 2px 15px 0;
  background: #5f6e82;
}
</style>
